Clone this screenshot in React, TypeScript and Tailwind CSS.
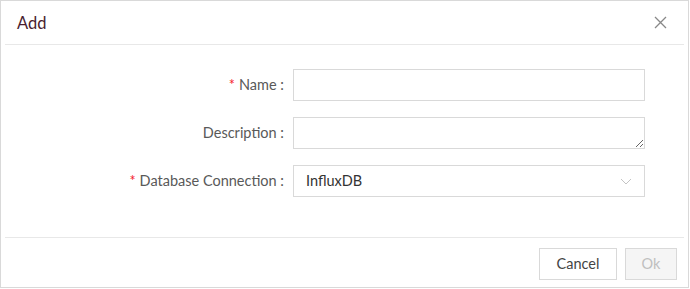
import React from 'react';

const font = { fontFamily: 'Lato, "Noto Sans", sans-serif' };

const FormRow: React.FC<{ label: string; required?: boolean; children: React.ReactNode }> = ({ label, required, children }) => (
  <div className="flex items-center h-8">
    <div className="w-[282px] pr-[3px] text-right text-[14.5px] text-[#595959]">
      {required && <span className="text-[#f5222d] mr-1">*</span>}
      {label} :
    </div>
    <div className="ml-[6px] w-[352px] h-8">{children}</div>
  </div>
);

const App: React.FC = () => {
  return (
    <div className="w-[690px] h-[289px] bg-white" style={font}>
      <div className="w-[689px] h-[288px] border border-[#d9d9d9] flex flex-col">
        <div className="px-1">
          <div className="h-[44px] flex items-center justify-between pl-3 pr-4 border-b border-[#e8e8e8]">
            <h3 className="text-[16.5px] text-[#4a1d30] pt-[1px]">Add</h3>
            <button className="w-4 h-4 flex items-center justify-center text-[#888]">
              <svg width="13" height="13" viewBox="0 0 13 13" fill="none" stroke="currentColor" strokeWidth="1.3">
                <path d="M1 1L12 12M12 1L1 12" />
              </svg>
            </button>
          </div>
        </div>

        <div className="flex flex-col gap-4 pt-6 h-[192px] px-1">
          <FormRow label="Name" required>
            <input type="text" className="w-full h-full border border-[#d9d9d9] outline-none px-3 text-[14px]" />
          </FormRow>
          <FormRow label="Description">
            <textarea className="block w-full h-full border border-[#d9d9d9] outline-none px-3 text-[14px]" />
          </FormRow>
          <FormRow label="Database Connection" required>
            <div className="w-full h-full border border-[#d9d9d9] flex items-center justify-between pl-3 pr-3">
              <span className="text-[14.5px] text-[#333]">InfluxDB</span>
              <svg width="12" height="7" viewBox="0 0 12 7" fill="none" stroke="#c4c4c4" strokeWidth="1">
                <path d="M1 1L6 6L11 1" />
              </svg>
            </div>
          </FormRow>
        </div>

        <div className="px-1">
          <div className="border-t border-[#e8e8e8] flex justify-end gap-2 pt-[10px] pr-[7px]">
            <button className="w-[78px] h-8 border border-[#d9d9d9] bg-white text-[14.5px] text-[#444]">Cancel</button>
            <button className="w-[52px] h-8 border border-[#d9d9d9] bg-[#f5f5f5] text-[14.5px] text-[#bfbfbf]">Ok</button>
          </div>
        </div>
      </div>
    </div>
  );
};

export default App;
